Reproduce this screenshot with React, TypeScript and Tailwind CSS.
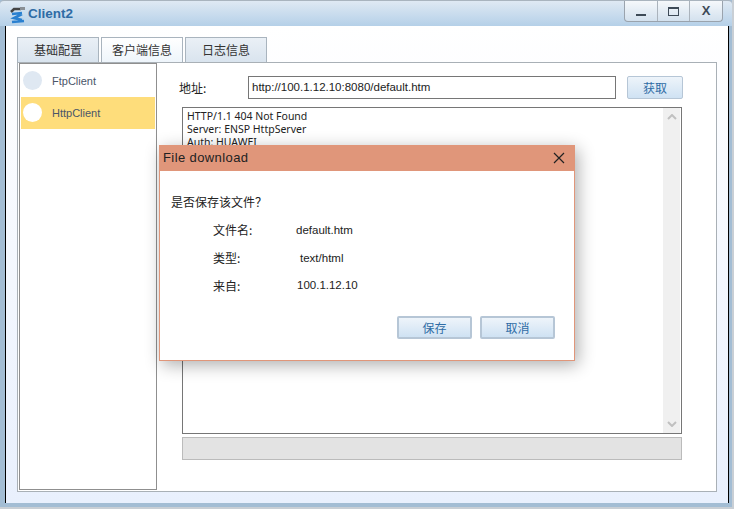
import React from "react";

const cjk = "font-['Noto_Sans_CJK_SC','Liberation_Sans',sans-serif]";

const ClientIcon = () => (
  <svg width="18" height="18" viewBox="0 0 18 18" className="shrink-0">
    <path d="M2 6 L5 3 L12 3" stroke="#444" strokeWidth="2.5" fill="none" />
    <rect x="11" y="1" width="5" height="3" fill="#8a8f94" />
    <path d="M3 8 L13 7 M13 8 L5 12 L13 14 M3 16 L15 15" stroke="#2a80d0" strokeWidth="2.6" fill="none" />
  </svg>
);

const TitleBar = () => (
  <div className="h-[26px] shrink-0 flex items-start justify-between pl-[9px] pr-[9px] bg-gradient-to-b from-[#dfe9f3] to-[#b5d0e8] border-t border-[#a9b4be] rounded-t-[4px]">
    <div className="flex items-center gap-[1px] h-[27px]">
      <ClientIcon />
      <span className="text-[13.5px] font-bold text-[#2f6ca5] font-['Liberation_Sans',sans-serif]">
        Client2
      </span>
    </div>
    <div className="flex h-[21px] border border-t-0 border-[#9aa3ad] rounded-b-[4px] overflow-hidden bg-gradient-to-b from-[#f5f8fb] to-[#d3e1ee]">
      <div className="w-[33px] flex items-center justify-center border-r border-[#aab3bc]">
        <div className="w-[10px] h-[2px] mt-[7px] bg-[#3d4a57]" />
      </div>
      <div className="w-[32px] flex items-center justify-center border-r border-[#aab3bc]">
        <div className="w-[11px] h-[9px] border border-[#3d4a57] border-t-[2px]" />
      </div>
      <div className="w-[32px] flex items-center justify-center text-[13px] font-bold text-[#3d4a57] font-['Liberation_Sans',sans-serif]">
        X
      </div>
    </div>
  </div>
);

const Tab = ({ label, active }: { label: string; active?: boolean }) => (
  <div
    className={`w-[82px] h-[25px] flex items-center justify-center text-[12px] text-[#333] border border-b-0 border-[#a9b4be] ${cjk} ${
      active
        ? "bg-gradient-to-b from-[#ffffff] to-[#eef5fb]"
        : "bg-gradient-to-b from-[#eaf0f6] to-[#d9e4ee]"
    }`}
  >
    {label}
  </div>
);

const SideItem = ({ label, active }: { label: string; active?: boolean }) => (
  <div className={`h-[32px] flex items-center pl-[2px] ${active ? "bg-[#fedd7b]" : ""}`}>
    <div className={`w-[19px] h-[19px] -mt-[1px] rounded-full ${active ? "bg-white" : "bg-[#dfe8f2]"}`} />
    <span className="ml-[10px] text-[11px] text-[#4a5568] font-['Liberation_Sans',sans-serif]">{label}</span>
  </div>
);

const DlgButton = ({ label }: { label: string }) => (
  <div
    className={`w-[75px] h-[23px] flex items-center justify-center text-[12px] text-[#2f6ca5] rounded-[2px] border-2 border-[#b6c6d6] bg-gradient-to-b from-[#eef4fa] to-[#cfe2f3] ${cjk}`}
  >
    {label}
  </div>
);

const InfoRow = ({ label, value, indent }: { label: string; value: string; indent: string }) => (
  <div className={`flex h-[28px] items-center text-[12px] text-[#222] ${cjk}`}>
    <span className="w-[83px]">{label}</span>
    <span className={`font-['Liberation_Sans',sans-serif] text-[11.5px] ${indent}`}>{value}</span>
  </div>
);

const Dialog = () => (
  <div className="absolute left-[159px] top-[145px] w-[416px] h-[216px] bg-white border border-t-0 border-[#e0967a] shadow-[3px_4px_16px_rgba(0,0,0,0.32)]">
    <div className="h-[26px] -mx-[1px] bg-[#e0967a] flex items-center justify-between pl-[4px] pr-[10px]">
      <span className="text-[13px] tracking-[0.4px] text-[#222] font-['Liberation_Sans',sans-serif]">File download</span>
      <svg width="12" height="12" viewBox="0 0 12 12">
        <path d="M1 1 L11 11 M11 1 L1 11" stroke="#222" strokeWidth="1.2" />
      </svg>
    </div>
    <div className={`pt-[22px] pl-[11px] text-[12px] leading-[18px] text-[#222] ${cjk}`}>是否保存该文件？</div>
    <div className="pt-[5px] pl-[53px]">
      <InfoRow label="文件名:" value="default.htm" indent="pt-[1px]" />
      <InfoRow label="类型:" value="text/html" indent="ml-[4px] pt-[1px]" />
      <InfoRow label="来自:" value="100.1.12.10" indent="ml-[1px]" />
    </div>
    <div className="flex justify-end gap-[8px] pr-[19px] pt-[16px]">
      <DlgButton label="保存" />
      <DlgButton label="取消" />
    </div>
  </div>
);

export default function App() {
  return (
    <div className="relative w-[734px] h-[509px] overflow-hidden flex flex-col bg-[#a3bdd4] border-b-2 border-r-2 border-[#c9cfd5]">
      <TitleBar />
      <div className="flex-1 flex flex-col border-x border-black ml-[5px] mr-[3px] mb-[4px] pl-[11px] pt-[11px] bg-gradient-to-b from-white to-[#e9f0fd]">
        <div className="flex gap-[2px] h-[25px] shrink-0">
          <Tab label="基础配置" />
          <Tab label="客户端信息" active />
          <Tab label="日志信息" />
        </div>
        <div className="w-[700px] h-[430px] bg-white border border-[#a9b0b6] flex">
          <div className="w-[138px] ml-[1px] mb-[1px] border border-[#8f8f8f] bg-white p-[1px]">
            <SideItem label="FtpClient" />
            <SideItem label="HttpClient" active />
          </div>
          <div className="flex-1 pl-[25px] pt-[13px] flex flex-col">
            <div className="flex h-[23px] items-center">
              <span className={`w-[69px] -ml-[3px] text-[12px] text-[#222] ${cjk}`}>地址:</span>
              <div className="w-[368px] h-[23px] border border-[#767676] flex items-center pl-[3px] text-[11.5px] text-[#222] font-['Liberation_Sans',sans-serif]">
                http://100.1.12.10:8080/default.htm
              </div>
              <div
                className={`ml-[11px] w-[56px] h-[23px] flex items-center justify-center text-[12px] text-[#2f6ca5] rounded-[2px] border border-[#b6c6d6] bg-gradient-to-b from-[#eef4fa] to-[#cfe2f3] ${cjk}`}
              >
                获取
              </div>
            </div>
            <div className="mt-[8px] w-[500px] h-[327px] border border-[#767676] flex">
              <div className="flex-1 pl-[4px] pt-[2px] text-[10.5px] leading-[13px] text-[#222] font-['Noto_Sans',sans-serif]">
                <div>HTTP/1.1 404 Not Found</div>
                <div>Server: ENSP HttpServer</div>
                <div>Auth: HUAWEI</div>
              </div>
              <div className="w-[17px] mr-[1px] bg-[#f0f0f0] flex flex-col items-center justify-between py-[6px]">
                <svg width="10" height="6" viewBox="0 0 10 6">
                  <path d="M1 5 L5 1 L9 5" stroke="#c0c0c0" strokeWidth="2" fill="none" />
                </svg>
                <svg width="10" height="6" viewBox="0 0 10 6">
                  <path d="M1 1 L5 5 L9 1" stroke="#c0c0c0" strokeWidth="2" fill="none" />
                </svg>
              </div>
            </div>
            <div className="mt-[3px] w-[500px] h-[23px] bg-[#e3e3e3] border border-[#bbbbbb]" />
          </div>
        </div>
      </div>
      <Dialog />
    </div>
  );
}
